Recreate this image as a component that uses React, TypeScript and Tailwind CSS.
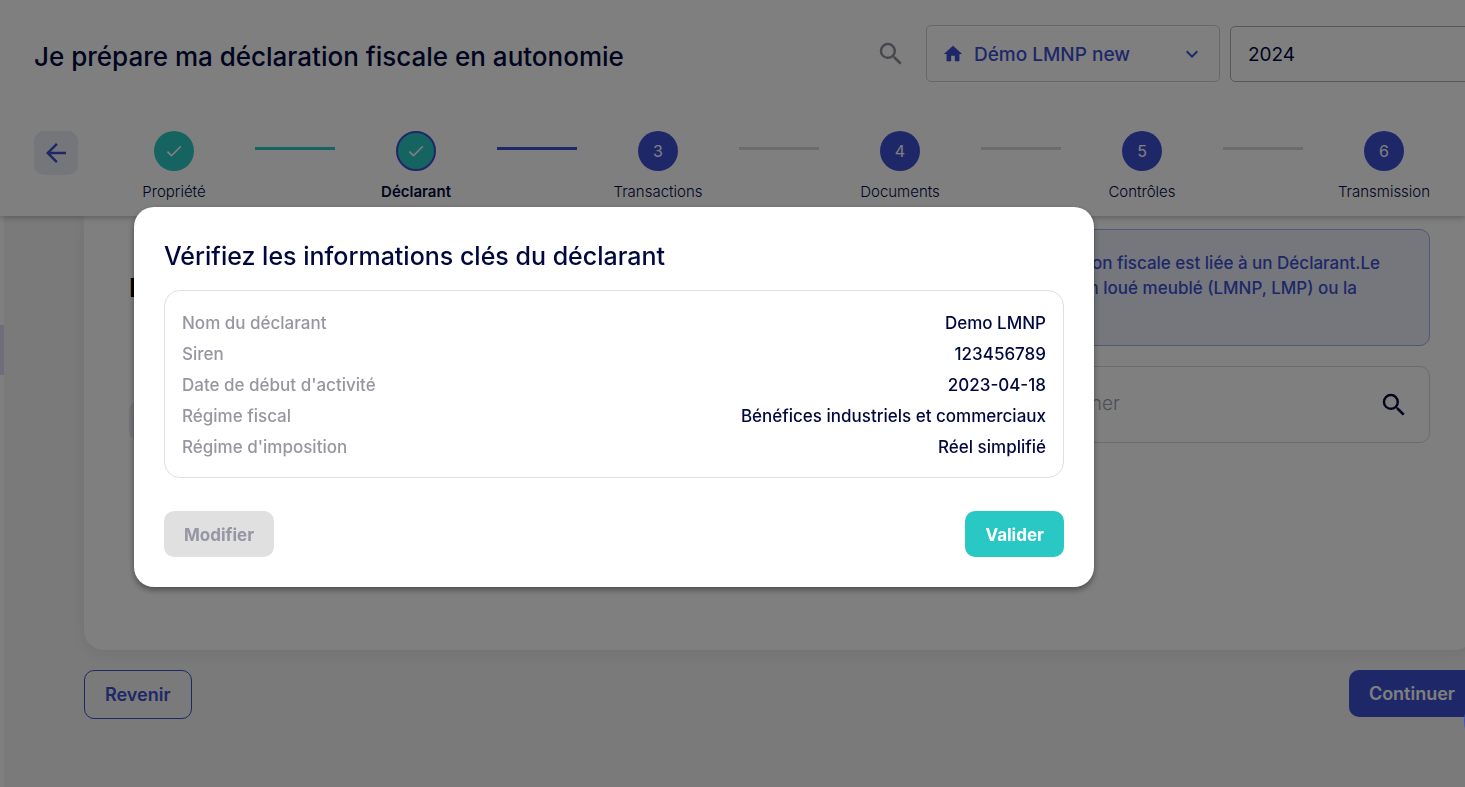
import { Fragment } from "react";
import { MdAdd, MdArrowBack, MdCheck, MdHome, MdKeyboardArrowDown, MdSearch } from "react-icons/md";
import clsx from "clsx";

type Step = { label: string; status: "done" | "current" | "todo" };

const STEPS: Step[] = [
  { label: "Propriété", status: "done" },
  { label: "Déclarant", status: "current" },
  { label: "Transactions", status: "todo" },
  { label: "Documents", status: "todo" },
  { label: "Contrôles", status: "todo" },
  { label: "Transmission", status: "todo" },
];

const INFOS = [
  { label: "Nom du déclarant", value: "Demo LMNP" },
  { label: "Siren", value: "123456789" },
  { label: "Date de début d'activité", value: "2023-04-18" },
  { label: "Régime fiscal", value: "Bénéfices industriels et commerciaux" },
  { label: "Régime d'imposition", value: "Réel simplifié" },
];

function Stepper() {
  return (
    <ol className="flex flex-1">
      {STEPS.map(({ label, status }, i) => (
        <Fragment key={label}>
          <li className="flex flex-1 flex-col items-center">
            <span
              className={clsx(
                "flex size-10 items-center justify-center rounded-full text-base text-white",
                status === "todo" ? "bg-[#3c50d2]" : "bg-[#2ac8c4]",
                status === "current" && "border-2 border-[#3c50d2]",
              )}
            >
              {status === "todo" ? i + 1 : <MdCheck size={20} />}
            </span>
            <span
              className={clsx(
                "mt-[11px] text-[15px] leading-5",
                status === "current" ? "font-semibold" : "font-light",
              )}
            >
              {label}
            </span>
          </li>
          {i < STEPS.length - 1 && (
            <li
              aria-hidden="true"
              className={clsx(
                "mt-4 h-[3px] w-20",
                status === "done" && "bg-[#2ac8c4]",
                status === "current" && "bg-[#3c50d2]",
                status === "todo" && "bg-[#d8d8d8]",
              )}
            />
          )}
        </Fragment>
      ))}
    </ol>
  );
}

function Header() {
  return (
    <header className="relative bg-white pt-[25px] pb-[14px] shadow-[0_2px_6px_rgba(0,0,0,0.25)]">
      <div className="-mr-2.5 flex items-center pl-[34px]">
        <h1 className="flex-1 pt-1.5 text-[26px] leading-8 font-medium">
          Je prépare ma déclaration fiscale en autonomie
        </h1>
        <button type="button" aria-label="Rechercher" className="mr-5 text-[#8c8c9b]">
          <MdSearch size={30} />
        </button>
        <button
          type="button"
          className="mr-2.5 flex h-[57px] w-[294px] items-center rounded-[5px] border border-[#d0d0d0] px-[15px] text-[19px] font-medium text-[#3c50d2]"
        >
          <MdHome size={22} />
          <span className="ml-2.5 flex-1 pt-[3px] text-left">Démo LMNP new</span>
          <MdKeyboardArrowDown size={24} />
        </button>
        <select
          aria-label="Année"
          className="h-14 w-[245px] appearance-none rounded-[5px] border border-[#b0b0b0] px-[17px] pt-[3px] text-[19px]"
        >
          <option>2024</option>
        </select>
      </div>
      <div className="mt-[49px] flex pl-[34px]">
        <button
          type="button"
          aria-label="Retour"
          className="mr-[15px] flex size-11 items-center justify-center rounded-[10px] bg-[#ebecf5] text-[#3c50d2]"
        >
          <MdArrowBack size={30} />
        </button>
        <Stepper />
      </div>
    </header>
  );
}

function DeclarantCard() {
  return (
    <section className="flex h-[434px] items-start justify-between rounded-b-[20px] bg-white px-[45px] pt-[13px] shadow-[0_4px_16px_rgba(0,0,0,0.08)]">
      <div>
        <h2 className="mt-[43px] text-[26px] leading-8 font-semibold text-black">Déclarant</h2>
        <button
          type="button"
          aria-label="Ajouter un déclarant"
          className="mt-[97px] flex size-10 items-center justify-center rounded-[10px] bg-[#ebecf5]"
        >
          <MdAdd size={24} />
        </button>
      </div>
      <div className="w-[630px]">
        <p className="flex h-[117px] flex-col items-end rounded-[10px] border border-[#a0aeee] bg-[#eaeff8] px-[49px] pt-[21px] text-[17px] leading-[25px] font-medium text-[#3c50d2]">
          <span>Une déclaration fiscale est liée à un Déclarant.Le</span>
          <span className="pr-[23px]">déclarant est le bien loué meublé (LMNP, LMP) ou la</span>
        </p>
        <label className="mt-5 flex h-[77px] items-center rounded-[10px] border border-[#d8d8d8] pr-5 pl-[217px]">
          <input
            type="text"
            aria-label="Rechercher un déclarant"
            placeholder="Rechercher"
            className="min-w-0 flex-1 text-[19px] font-light placeholder:text-[#9a9aa8]"
          />
          <MdSearch size={30} />
        </label>
      </div>
    </section>
  );
}

function VerifyDialog() {
  return (
    <div className="fixed inset-0 flex items-start bg-black/50 pt-[207px] pl-[134px]">
      <div
        role="dialog"
        aria-labelledby="verify-title"
        className="w-[960px] rounded-[20px] bg-white p-[30px] shadow-[0_3px_6px_rgba(0,0,0,0.4)]"
      >
        <h2 id="verify-title" className="pt-[3px] text-[25px] leading-8 font-medium">
          Vérifiez les informations clés du déclarant
        </h2>
        <dl className="mt-[18px] rounded-2xl border border-[#e0e0e0] px-[17px] pt-[17px] pb-[14px] text-[17px] leading-[31px] font-medium">
          {INFOS.map(({ label, value }) => (
            <div key={label} className="flex justify-between">
              <dt className="text-[#9696a0]">{label}</dt>
              <dd>{value}</dd>
            </div>
          ))}
        </dl>
        <div className="mt-[33px] flex justify-between text-[17px]">
          <button
            type="button"
            className="h-[46px] rounded-[10px] bg-[#e0e0e0] px-5 pt-[3px] font-bold text-[#9696a5]"
          >
            Modifier
          </button>
          <button
            type="button"
            className="h-[46px] rounded-[10px] bg-[#2ac8c4] px-5 pt-[3px] font-bold text-white"
          >
            Valider
          </button>
        </div>
      </div>
    </div>
  );
}

export default function App() {
  return (
    <div className="flex min-h-screen flex-col overflow-hidden bg-white font-['Inter',sans-serif] text-[#00083f]">
      <Header />
      <div className="flex flex-1">
        <aside className="w-1 pt-[109px]">
          <div className="h-[50px] bg-[#dcdcf5]" />
        </aside>
        <main className="-mr-2.5 flex-1 bg-[#f5f5f5] pl-20">
          <DeclarantCard />
          <div className="mt-5 flex items-start justify-between text-lg font-semibold">
            <button
              type="button"
              className="h-[49px] rounded-[10px] border border-[#3c50d2] px-5 text-[#3c50d2]"
            >
              Revenir
            </button>
            <button type="button" className="h-[47px] rounded-[10px] bg-[#3c50d2] px-5 text-white">
              Continuer
            </button>
          </div>
        </main>
      </div>
      <VerifyDialog />
      {/* chat launcher, peeks in from the right edge above the overlay */}
      <button
        type="button"
        aria-label="Ouvrir le chat"
        className="fixed -right-[59px] bottom-9 size-15 rounded-full bg-[#3c50d2]"
      />
    </div>
  );
}
